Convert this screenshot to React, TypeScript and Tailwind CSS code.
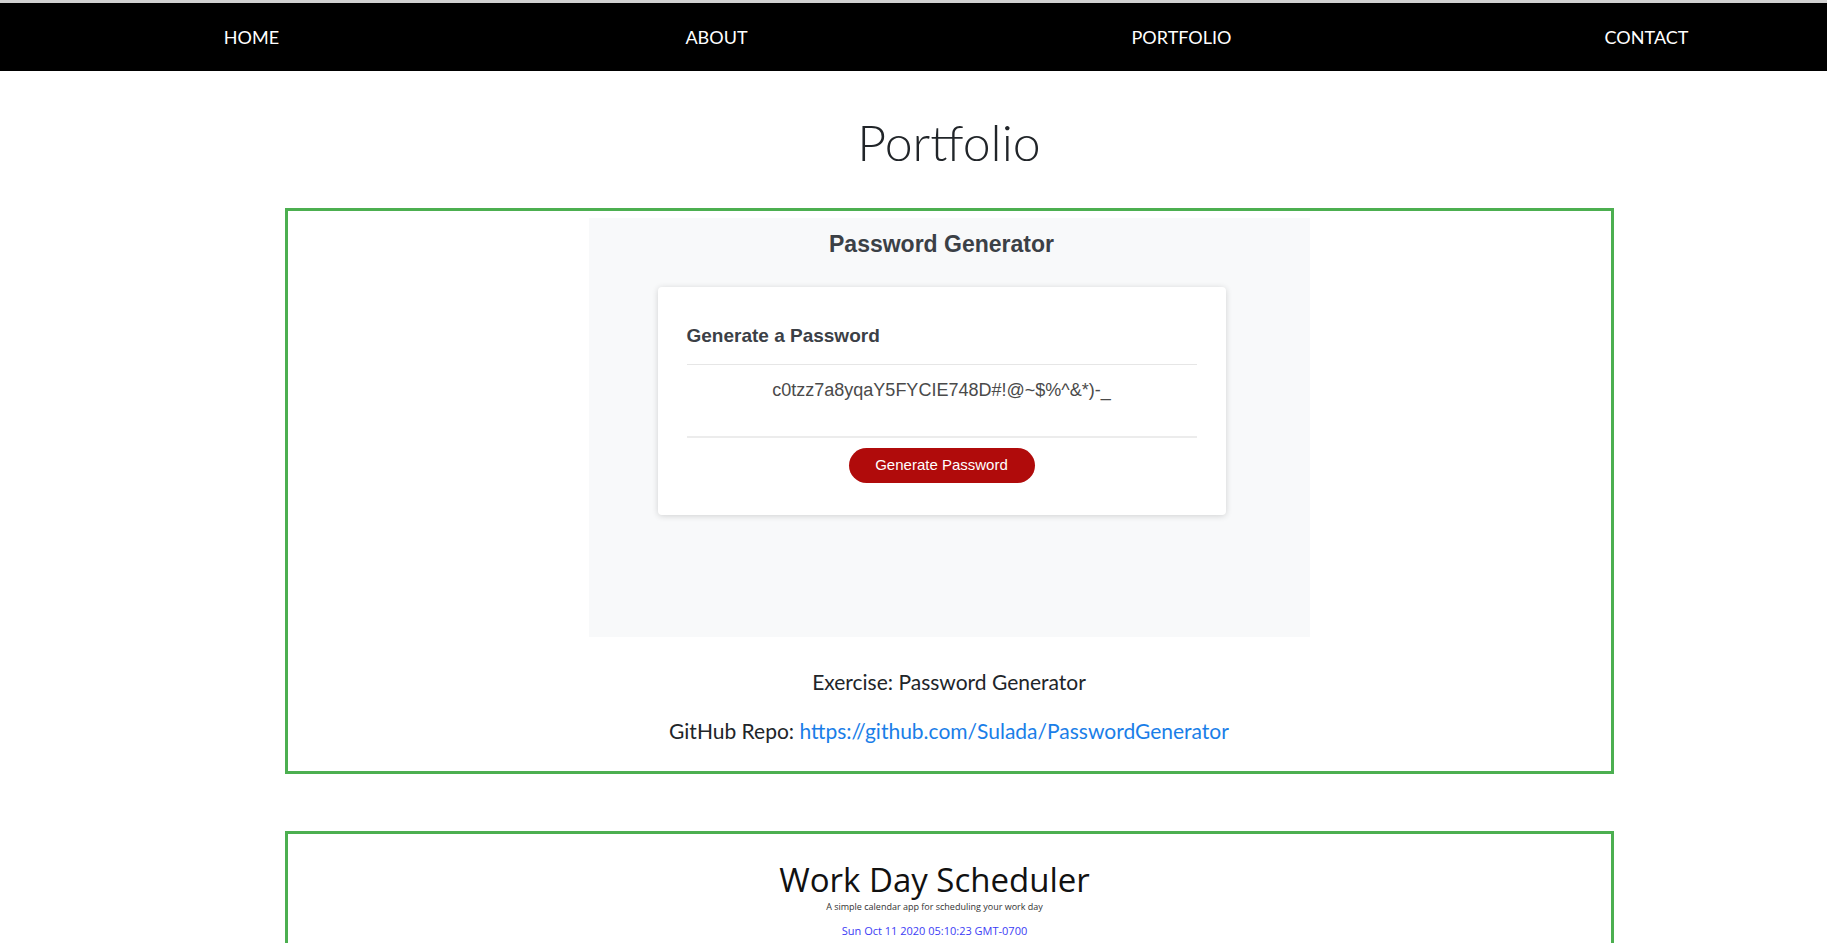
const navItems = ["HOME", "ABOUT", "PORTFOLIO", "CONTACT"];

function PasswordShot() {
  return (
    <div className="w-[721px] h-[419px] mx-auto bg-[#f8f9fa] pr-[15px] font-['Liberation_Sans',Arial,sans-serif]">
      <h2 className="pt-[12px] text-center text-[23px] leading-[28px] font-bold text-[#3b4046]">
        Password Generator
      </h2>
      <div className="mx-auto mt-[29px] w-[568px] bg-white rounded-[4px] shadow-[0_1px_6px_rgba(0,0,0,0.16)] px-[29px] pt-[37px] pb-[32px] text-left">
        <h3 className="text-[19px] leading-[23px] font-bold text-[#3b4046]">
          Generate a Password
        </h3>
        <div className="mt-[17px] h-px bg-[#e6e6e6]" />
        <p className="mt-[14px] text-center text-[18px] leading-[22px] text-[#4a4a4a]">
          c0tzz7a8yqaY5FYCIE748D#!@~$%^&amp;*)-_
        </p>
        <div className="mt-[35px] h-[2px] bg-[#ececec]" />
        <div className="mt-[10px] flex justify-center">
          <button className="w-[186px] h-[35px] rounded-full bg-[#b00b0b] text-white text-[15px]">
            Generate Password
          </button>
        </div>
      </div>
    </div>
  );
}

function SchedulerShot() {
  return (
    <div className="w-[721px] h-[419px] mx-auto bg-white pr-[29px] text-center font-['Open_Sans',sans-serif]">
      <h2 className="pt-[18px] text-[33px] leading-[42px] text-[#111]">
        Work Day Scheduler
      </h2>
      <p className="text-[9px] leading-[12px] text-[#333]">
        A simple calendar app for scheduling your work day
      </p>
      <p className="mt-[11px] text-[11px] leading-[14px] text-[#3c3cf5]">
        Sun Oct 11 2020 05:10:23 GMT-0700
      </p>
    </div>
  );
}

function Project({
  shot,
  title,
  repo,
}: {
  shot: React.ReactNode;
  title: string;
  repo: string;
}) {
  return (
    <div className="w-[1329px] mx-auto border-[3px] border-[#4caf50] pt-[7px] pb-[28px] text-center">
      {shot}
      <p className="mt-[33px] text-[21px] leading-[24px] text-[#212529]">
        Exercise: {title}
      </p>
      <p className="mt-[25px] text-[21px] leading-[24px] text-[#212529]">
        GitHub Repo:{" "}
        <a href="#" className="text-[#1a7ee8]">
          {repo}
        </a>
      </p>
    </div>
  );
}

export default function App() {
  return (
    <div className="h-[943px] overflow-hidden bg-white border-t-[3px] border-[#d0d0d0] font-['Lato',sans-serif]">
      <nav className="h-[68px] bg-black overflow-hidden">
        <ul className="ml-[19px] w-[1860px] h-full grid grid-cols-4 items-center">
          {navItems.map((item) => (
            <li key={item} className="text-center text-white text-[18px]">
              <a href="#">{item}</a>
            </li>
          ))}
        </ul>
      </nav>
      <main className="pl-[71px]">
        <h1 className="pt-[42px] pb-[37px] text-center text-[50px] leading-[58px] font-light text-[#212529]">
          Portfolio
        </h1>
        <div className="space-y-[57px]">
          <Project
            shot={<PasswordShot />}
            title="Password Generator"
            repo="https://github.com/Sulada/PasswordGenerator"
          />
          <Project
            shot={<SchedulerShot />}
            title="Work Day Scheduler"
            repo="https://github.com/Sulada/WorkDayScheduler"
          />
        </div>
      </main>
    </div>
  );
}
